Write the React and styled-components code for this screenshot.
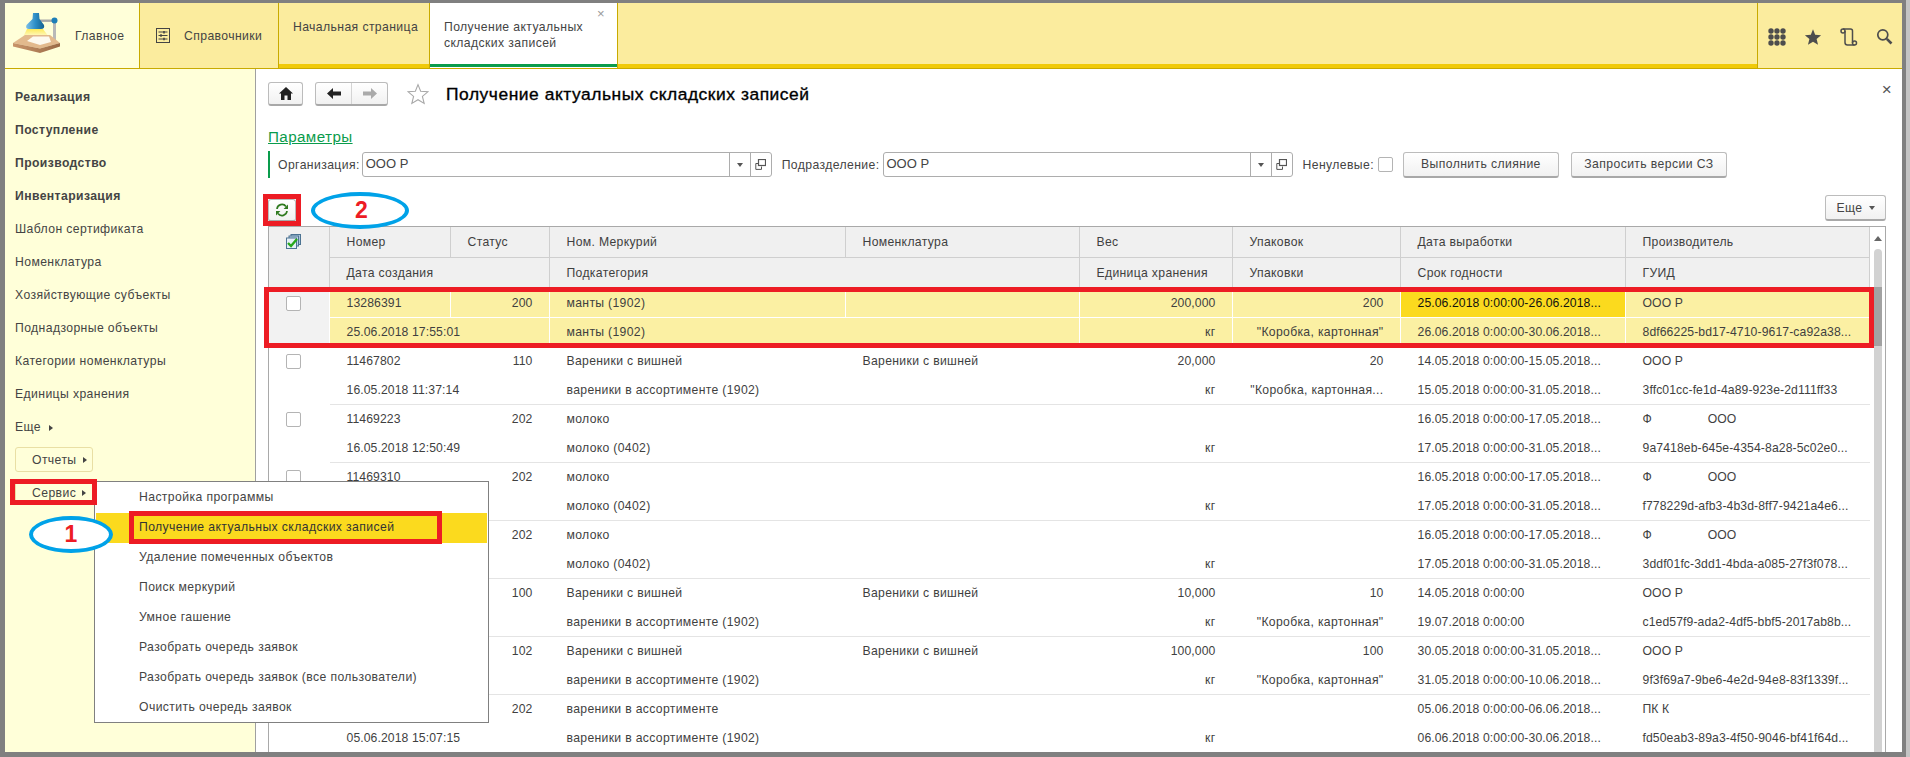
import React from "react";
import styled, { createGlobalStyle } from "styled-components";

const GlobalStyle = createGlobalStyle`
  html, body { margin: 0; padding: 0; background: #808080; }
  * { box-sizing: border-box; }
`;

const Page = styled.div`
  position: relative;
  display: flex;
  flex-direction: column;
  width: 1910px;
  height: 757px;
  padding: 3px 4px 5px 5px;
  border-right: 4px solid #c4c4c4;
  background: #808080;
  overflow: hidden;
  font-family: "Liberation Sans", Arial, sans-serif;
  font-size: 12.2px;
  letter-spacing: 0.4px;
  color: #444;
`;

const TopBar = styled.div`
  display: flex;
  flex: none;
  height: 66px;
  background: #fbec9e;
  border-bottom: 1px solid #c8aa00;
`;
const LogoTab = styled.div`
  display: flex;
  align-items: center;
  gap: 12px;
  width: 135px;
  padding-left: 6px;
  background: #ffffd9;
  border-right: 1px solid #c8aa00;
`;
const SectionTab = styled.div`
  display: flex;
  align-items: center;
  gap: 14px;
  width: 139px;
  padding-left: 16px;
  border-right: 1px solid #c8aa00;
`;
const OpenTab = styled.div`
  position: relative;
  width: ${(p) => p.$width}px;
  padding: 16px 0 0 14px;
  line-height: 16px;
  white-space: nowrap;
  border-right: 1px solid #c8aa00;
  background: ${(p) => (p.$active ? "#fff" : "transparent")};
  box-shadow: ${(p) =>
    p.$active ? "inset 0 -1px 0 #fff, inset 0 -4px 0 #0a9c4c" : "inset 0 -4px 0 #f0ca0a"};
`;
const TabClose = styled.span`
  position: absolute;
  top: 3px;
  right: 12px;
  font-size: 13px;
  color: #999;
`;
const TabSpacer = styled.div`
  flex: 1;
  box-shadow: inset 0 -4px 0 #f0ca0a;
`;
const QuickTools = styled.div`
  display: flex;
  align-items: center;
  gap: 18px;
  width: 145px;
  padding: 2px 0 0 10px;
  border-left: 1px solid #c8aa00;
  color: #4d4d4d;
`;

const Body = styled.div`
  display: flex;
  flex: 1;
  min-height: 0;
`;
const Sidebar = styled.div`
  flex: none;
  width: 251px;
  padding: 12px 0 0 10px;
  background: #ffffd9;
  border-right: 1px solid #a0a0a0;
`;
const SideItem = styled.div`
  height: 33px;
  line-height: 33px;
  font-weight: ${(p) => (p.$bold ? 700 : 400)};
`;
const SideButton = styled.div`
  display: flex;
  align-items: center;
  gap: 6px;
  width: 78px;
  height: 25px;
  margin-top: ${(p) => p.$top}px;
  padding-left: 16px;
  border: 1px solid #e9dfa4;
  border-radius: 3px;
`;
const Caret = styled.span`
  display: inline-block;
  width: 0;
  height: 0;
  margin-left: ${(p) => p.$left || 0}px;
  border-top: 3px solid transparent;
  border-bottom: 3px solid transparent;
  border-left: 4px solid #444;
`;

const Content = styled.div`
  display: flex;
  flex: 1;
  flex-direction: column;
  min-width: 0;
  padding: 13px 16px 0 12px;
  background: #fff;
`;
const TitleRow = styled.div`
  display: flex;
  align-items: center;
  flex: none;
  height: 24px;
`;
const Button = styled.button`
  display: flex;
  align-items: center;
  justify-content: center;
  gap: ${(p) => p.$gap || 0}px;
  flex: none;
  width: ${(p) => p.$width}px;
  height: ${(p) => p.$height || 25}px;
  margin-left: ${(p) => p.$left || 0}px;
  margin-top: ${(p) => p.$top || 0}px;
  padding: 0;
  font: inherit;
  letter-spacing: inherit;
  color: #444;
  background: linear-gradient(#fff, #f1f1f1);
  border: 1px solid #bcbcbc;
  border-bottom: 2px solid #a8a8a8;
  border-radius: 3px;
`;
const NavGroup = styled.div`
  display: flex;
  flex: none;
  width: 73px;
  height: 24px;
  margin-left: 12px;
  background: linear-gradient(#fff, #f1f1f1);
  border: 1px solid #bcbcbc;
  border-bottom: 2px solid #a8a8a8;
  border-radius: 3px;
`;
const NavPart = styled.div`
  display: flex;
  align-items: center;
  justify-content: center;
  flex: 1;
  border-left: ${(p) => (p.$split ? "1px solid #d4d4d4" : "none")};
`;
const FavoriteMark = styled.span`
  flex: none;
  height: 22px;
  margin-left: 19px;
`;
const Title = styled.h1`
  margin: 0 0 0 17px;
  font-size: 17.4px;
  font-weight: 400;
  letter-spacing: 0.55px;
  -webkit-text-stroke: 0.35px #000;
  color: #000;
`;
const PanelClose = styled.span`
  margin-left: auto;
  margin-right: -6px;
  margin-top: -9px;
  font-size: 17px;
  color: #555;
`;
const ParamsLink = styled.a`
  align-self: flex-start;
  margin-top: 22px;
  font-size: 15.2px;
  line-height: 18px;
  color: #0a9c4c;
  text-decoration: underline;
`;
const FilterRow = styled.div`
  display: flex;
  align-items: center;
  flex: none;
  height: 27px;
  margin-top: 5px;
  padding-left: 8px;
  border-left: 2px solid #0a9c4c;
`;
const FieldLabel = styled.span`
  flex: none;
  margin-left: ${(p) => p.$left || 0}px;
  margin-right: ${(p) => p.$right || 0}px;
  white-space: nowrap;
`;
const Field = styled.div`
  display: flex;
  flex: none;
  width: ${(p) => p.$width}px;
  height: 25px;
  border: 1px solid #adadad;
  border-radius: 3px;
`;
const FieldValue = styled.div`
  flex: 1;
  padding: 0 3px;
  font-size: 13px;
  letter-spacing: 0;
  line-height: 22px;
`;
const FieldAction = styled.div`
  display: flex;
  align-items: center;
  justify-content: center;
  flex: none;
  width: 21px;
  border-left: 1px solid #adadad;
`;
const DownCaret = styled.span`
  width: 0;
  height: 0;
  border-left: 3px solid transparent;
  border-right: 3px solid transparent;
  border-top: 4px solid #555;
`;
const CheckBox = styled.span`
  display: block;
  flex: none;
  width: 15px;
  height: 15px;
  margin-left: ${(p) => p.$left || 0}px;
  background: #fff;
  border: 1px solid #b4b4b4;
  border-radius: 2px;
`;
const CommandBar = styled.div`
  display: flex;
  justify-content: space-between;
  flex: none;
  height: 22px;
  margin-top: 21px;
`;

const TableWrap = styled.div`
  display: flex;
  flex: 1;
  min-height: 0;
  margin-top: 5px;
  border: 1px solid #a9a9a9;
  border-bottom: none;
`;
const Rows = styled.div`
  flex: none;
  width: 1601px;
  overflow: hidden;
`;
const Record = styled.div`
  display: grid;
  grid-template-columns: 61px 121px 99px 296px 234px 153px 168px 225px 244px;
  grid-template-rows: ${(p) => (p.$head ? "31px 31px" : "29px 29px")};
  height: ${(p) => (p.$head ? 62 : 58)}px;
  background: ${(p) => (p.$head ? "#f0f0f0" : p.$selected ? "#fbf0a3" : "#fff")};
  border-bottom: ${(p) => (p.$head ? "none" : "1px solid #e4e4e4")};
`;
const lineColor = (p) => (p.$head ? "#cfcfcf" : p.$selected ? "#fff" : "transparent");
const Cell = styled.div`
  grid-column: span ${(p) => p.$span || 1};
  padding: 0 16.5px;
  line-height: ${(p) => (p.$head ? 30 : 29)}px;
  letter-spacing: ${(p) => (p.$plain ? 0.1 : 0.33)}px;
  text-align: ${(p) => (p.$right ? "right" : "left")};
  white-space: pre;
  overflow: hidden;
  color: ${(p) => (p.$current ? "#111" : "#3f3f3f")};
  background: ${(p) => (p.$current ? "#fbda1e" : "transparent")};
  border-right: 1px solid ${lineColor};
  border-bottom: ${(p) => (p.$first ? "1px solid" : "0 solid")} ${lineColor};
`;
const MarkCell = styled.div`
  grid-row: span 2;
  padding: 7px 0 0 17px;
  background: ${(p) => (p.$head ? "#f0f0f0" : p.$selected ? "#f2f2f2" : "#fff")};
  border-right: 1px solid ${lineColor};
`;
const ScrollBar = styled.div`
  display: flex;
  flex: 1;
  flex-direction: column;
  align-items: center;
`;
const ScrollArrow = styled.span`
  flex: none;
  width: 0;
  height: 0;
  margin-top: 9px;
  border-left: 4px solid transparent;
  border-right: 4px solid transparent;
  border-bottom: 5px solid #666;
`;
const ScrollTrack = styled.div`
  flex: 1;
  width: 8px;
  margin-top: 8px;
  padding-top: 38px;
  background: #d2d2d2;
  border-radius: 4px 4px 0 0;
`;
const ScrollThumb = styled.div`
  height: 59px;
  background: #a2a2a2;
`;

const PopupMenu = styled.div`
  position: absolute;
  left: 94px;
  top: 481px;
  width: 395px;
  height: 242px;
  padding: 1px;
  background: #fff;
  border: 1px solid #808080;
`;
const MenuItem = styled.div`
  height: 30px;
  padding-left: 43px;
  line-height: 29px;
  background: ${(p) => (p.$hover ? "#fbda1e" : "transparent")};
  color: ${(p) => (p.$hover ? "#333" : "#444")};
`;
const RedFrame = styled.div`
  position: absolute;
  left: ${(p) => p.$x}px;
  top: ${(p) => p.$y}px;
  width: ${(p) => p.$w}px;
  height: ${(p) => p.$h}px;
  border: 5px solid #ed1c24;
  pointer-events: none;
`;
const Callout = styled.div`
  position: absolute;
  left: ${(p) => p.$x}px;
  top: ${(p) => p.$y}px;
  display: flex;
  align-items: center;
  justify-content: center;
  width: ${(p) => p.$w}px;
  height: 37px;
  padding-left: ${(p) => p.$shift || 0}px;
  background: #fff;
  border: 4px solid #00a2e8;
  border-radius: 50%;
  font-size: 23px;
  font-weight: 700;
  color: #ed1c24;
`;

const LampLogo = () => (
  <svg width="52" height="46" viewBox="0 0 52 46" style={{ marginTop: -6 }}>
    <defs>
      <linearGradient id="shade" x1="0" y1="0" x2="1" y2="0">
        <stop offset="0" stopColor="#7cc0e8" />
        <stop offset="0.5" stopColor="#2f8fc8" />
        <stop offset="1" stopColor="#15618f" />
      </linearGradient>
      <linearGradient id="beam" x1="0" y1="0" x2="0" y2="1">
        <stop offset="0" stopColor="#fdea5a" />
        <stop offset="1" stopColor="#fffbd0" />
      </linearGradient>
      <linearGradient id="edge" x1="0" y1="0" x2="1" y2="0">
        <stop offset="0" stopColor="#c8946a" />
        <stop offset="1" stopColor="#9a6a45" />
      </linearGradient>
    </defs>
    <path d="M16 19 L32 19 L38 27 L12 27 Z" fill="url(#beam)" />
    <rect x="42" y="10" width="3" height="20" fill="#b8b8b8" />
    <rect x="28" y="9.5" width="15" height="2.4" fill="#a8a8a8" />
    <circle cx="43.5" cy="10.5" r="3" fill="#1d7fb8" />
    <path d="M22 3 L28 3 L28.5 9 L33 15 Q34 19 30 19 L18 19 Q14 19 15.5 15 L21.5 9 Z" fill="url(#shade)" />
    <path d="M2 33 L14 25 L39 25 L49 33 L29 38.5 Z" fill="#e2b98d" />
    <path d="M2 33 L29 38.5 L49 33 L49 36.5 L29 43 L2 36.5 Z" fill="url(#edge)" />
    <path d="M16 31 L22 26.5 L38 26.5 L40 32 L29 35 Z" fill="#fdf9ee" />
  </svg>
);

const ListIcon = () => (
  <svg width="14" height="15" viewBox="0 0 14 15" fill="none" stroke="#444">
    <rect x="0.5" y="0.5" width="13" height="14" />
    <path d="M2.5 4h9M2.5 7.5h9M2.5 11h9" />
    <path d="M8 3v2.4M5 6.3v2.4M8 9.8v2.4" strokeWidth="1.6" />
  </svg>
);

const GridIcon = () => (
  <svg width="18" height="18" viewBox="0 0 18 18" fill="#4d4d4d">
    {[3, 9, 15].map((cy) =>
      [3, 9, 15].map((cx) => <circle key={`${cx}-${cy}`} cx={cx} cy={cy} r="2.7" />)
    )}
  </svg>
);
const StarIcon = ({ filled }) => (
  <svg width={filled ? 18 : 22} height={filled ? 18 : 22} viewBox="0 0 20 20">
    <path
      d="M10 1.5 L12.4 7.5 L19 8 L14 12.2 L15.6 18.6 L10 15.2 L4.4 18.6 L6 12.2 L1 8 L7.6 7.5 Z"
      fill={filled ? "#4d4d4d" : "#fff"}
      stroke={filled ? "none" : "#a8a8a8"}
    />
  </svg>
);
const HistoryIcon = () => (
  <svg width="18" height="18" viewBox="0 0 18 18" fill="none" stroke="#4d4d4d" strokeWidth="1.5">
    <circle cx="3" cy="3" r="2" />
    <path d="M3 1 H10.5 Q12.5 1 12.5 3 V15" />
    <path d="M5 3 V14.5 Q5 17 7.5 17 H14.5" />
    <circle cx="14.5" cy="15" r="2" />
  </svg>
);
const SearchIcon = () => (
  <svg width="17" height="17" viewBox="0 0 17 17" fill="none" stroke="#4d4d4d">
    <circle cx="6.8" cy="6.8" r="5" strokeWidth="1.7" />
    <path d="M10.8 10.8 L15.5 15.5" strokeWidth="2.6" />
  </svg>
);
const HomeIcon = () => (
  <svg width="14" height="13" viewBox="0 0 14 13" fill="#222">
    <path d="M7 0 L14 6.5 L12 6.5 L12 13 L8.5 13 L8.5 8.5 L5.5 8.5 L5.5 13 L2 13 L2 6.5 L0 6.5 Z" />
  </svg>
);
const ArrowIcon = ({ right, color }) => (
  <svg width="14" height="11" viewBox="0 0 14 11" fill={color}>
    <path
      d="M0 5.5 L6 0 L6 3.5 L14 3.5 L14 7.5 L6 7.5 L6 11 Z"
      transform={right ? "matrix(-1 0 0 1 14 0)" : undefined}
    />
  </svg>
);
const OpenIcon = () => (
  <svg width="11" height="11" viewBox="0 0 11 11" fill="none" stroke="#555">
    <rect x="3.5" y="0.5" width="7" height="6" strokeWidth="1.2" />
    <path d="M3 4.5 H0.8 V10.4 H6.5 V7.5" />
  </svg>
);
const RefreshIcon = () => (
  <svg width="14" height="14" viewBox="0 0 14 14" fill="none" stroke="#2f7a1f" strokeWidth="1.7">
    <path d="M2 6 A5 5 0 0 1 11 3.5" />
    <path d="M12 8 A5 5 0 0 1 3 10.5" />
    <path d="M13 1.5 L13 6 L8.6 6 Z" fill="#2f7a1f" stroke="none" />
    <path d="M1 12.5 L1 8 L5.4 8 Z" fill="#2f7a1f" stroke="none" />
  </svg>
);
const SelectAllIcon = () => (
  <svg width="15" height="15" viewBox="0 0 15 15">
    <rect x="5" y="0.5" width="9.5" height="10" fill="#a9c6dc" stroke="#4c7392" />
    <rect x="3" y="2" width="9.5" height="10" fill="#bdd4e6" stroke="#4c7392" />
    <rect x="0.5" y="4" width="10" height="10.5" fill="#e6f0f7" stroke="#4c7392" />
    <path d="M2 9 L5 12 L11 5" fill="none" stroke="#28a81c" strokeWidth="2.4" />
  </svg>
);

const sideLinks = [
  ["Реализация", true],
  ["Поступление", true],
  ["Производство", true],
  ["Инвентаризация", true],
  ["Шаблон сертификата"],
  ["Номенклатура"],
  ["Хозяйствующие субъекты"],
  ["Поднадзорные объекты"],
  ["Категории номенклатуры"],
  ["Единицы хранения"],
];

const menuItems = [
  "Настройка программы",
  "Получение актуальных складских записей",
  "Удаление помеченных объектов",
  "Поиск меркурий",
  "Умное гашение",
  "Разобрать очередь заявок",
  "Разобрать очередь заявок (все пользователи)",
  "Очистить очередь заявок",
];

const spacer = " ".repeat(16);
const box = "\"Коробка, картонная\"";
const varenikiSub = "вареники в ассортименте (1902)";
const varenik = "Вареники с вишней";

const rows = [
  { top: ["13286391", "200", "манты (1902)", "", "200,000", "200", "25.06.2018 0:00:00-26.06.2018...", "ООО Р"],
    bottom: ["25.06.2018 17:55:01", "манты (1902)", "кг", box, "26.06.2018 0:00:00-30.06.2018...", "8df66225-bd17-4710-9617-ca92a38..."], selected: true },
  { top: ["11467802", "110", varenik, varenik, "20,000", "20", "14.05.2018 0:00:00-15.05.2018...", "ООО Р"],
    bottom: ["16.05.2018 11:37:14", varenikiSub, "кг", "\"Коробка, картонная...", "15.05.2018 0:00:00-31.05.2018...", "3ffc01cc-fe1d-4a89-923e-2d111ff33"] },
  { top: ["11469223", "202", "молоко", "", "", "", "16.05.2018 0:00:00-17.05.2018...", "Ф" + spacer + "ООО"],
    bottom: ["16.05.2018 12:50:49", "молоко (0402)", "кг", "", "17.05.2018 0:00:00-31.05.2018...", "9a7418eb-645e-4354-8a28-5c02e0..."] },
  { top: ["11469310", "202", "молоко", "", "", "", "16.05.2018 0:00:00-17.05.2018...", "Ф" + spacer + "ООО"],
    bottom: ["", "молоко (0402)", "кг", "", "17.05.2018 0:00:00-31.05.2018...", "f778229d-afb3-4b3d-8ff7-9421a4e6..."] },
  { top: ["", "202", "молоко", "", "", "", "16.05.2018 0:00:00-17.05.2018...", "Ф" + spacer + "ООО"],
    bottom: ["", "молоко (0402)", "кг", "", "17.05.2018 0:00:00-31.05.2018...", "3ddf01fc-3dd1-4bda-a085-27f3f078..."] },
  { top: ["", "100", varenik, varenik, "10,000", "10", "14.05.2018 0:00:00", "ООО Р"],
    bottom: ["", varenikiSub, "кг", box, "19.07.2018 0:00:00", "c1ed57f9-ada2-4df5-bbf5-2017ab8b..."] },
  { top: ["", "102", varenik, varenik, "100,000", "100", "30.05.2018 0:00:00-31.05.2018...", "ООО Р"],
    bottom: ["", varenikiSub, "кг", box, "31.05.2018 0:00:00-10.06.2018...", "9f3f69a7-9be6-4e2d-94e8-83f1339f..."] },
  { top: ["", "202", "вареники в ассортименте", "", "", "", "05.06.2018 0:00:00-06.06.2018...", "ПК К"],
    bottom: ["05.06.2018 15:07:15", varenikiSub, "кг", "", "06.06.2018 0:00:00-30.06.2018...", "fd50eab3-89a3-4f50-9046-bf41f64d..."] },
];

const topRight = [false, true, false, false, true, true, false, false];
// latin, digits, dates and caps come out narrower than cyrillic lowercase
const isPlain = (text) => !/[а-яё]/.test(text);

const DataRow = ({ row }) => {
  const s = row.selected;
  return (
    <Record $selected={s}>
      <MarkCell $selected={s}>
        <CheckBox />
      </MarkCell>
      {row.top.map((text, i) => (
        <Cell key={i} $first $selected={s} $plain={isPlain(text)} $right={topRight[i]} $current={s && i === 6}>
          {text}
        </Cell>
      ))}
      <Cell $span={2} $plain $selected={s}>{row.bottom[0]}</Cell>
      <Cell $span={2} $selected={s}>{row.bottom[1]}</Cell>
      <Cell $selected={s} $right>{row.bottom[2]}</Cell>
      <Cell $selected={s} $right>{row.bottom[3]}</Cell>
      <Cell $selected={s} $plain>{row.bottom[4]}</Cell>
      <Cell $selected={s} $plain>{row.bottom[5]}</Cell>
    </Record>
  );
};

const App = () => (
  <Page>
    <GlobalStyle />
    <TopBar>
      <LogoTab>
        <LampLogo />
        Главное
      </LogoTab>
      <SectionTab>
        <ListIcon />
        Справочники
      </SectionTab>
      <OpenTab $width={151}>Начальная страница</OpenTab>
      <OpenTab $width={188} $active>
        Получение актуальных
        <br />
        складских записей
        <TabClose>×</TabClose>
      </OpenTab>
      <TabSpacer />
      <QuickTools>
        <GridIcon />
        <StarIcon filled />
        <HistoryIcon />
        <SearchIcon />
      </QuickTools>
    </TopBar>
    <Body>
      <Sidebar>
        {sideLinks.map(([text, bold]) => (
          <SideItem key={text} $bold={bold}>{text}</SideItem>
        ))}
        <SideItem>
          Еще <Caret $left={4} />
        </SideItem>
        <SideButton $top={3}>Отчеты <Caret /></SideButton>
        <SideButton $top={8}>Сервис <Caret /></SideButton>
      </Sidebar>
      <Content>
        <TitleRow>
          <Button $width={35} $height={24}><HomeIcon /></Button>
          <NavGroup>
            <NavPart><ArrowIcon color="#222" /></NavPart>
            <NavPart $split><ArrowIcon right color="#aaa" /></NavPart>
          </NavGroup>
          <FavoriteMark><StarIcon /></FavoriteMark>
          <Title>Получение актуальных складских записей</Title>
          <PanelClose>×</PanelClose>
        </TitleRow>
        <ParamsLink>Параметры</ParamsLink>
        <FilterRow>
          <FieldLabel $right={2}>Организация:</FieldLabel>
          <Field $width={410}>
            <FieldValue>ООО Р</FieldValue>
            <FieldAction><DownCaret /></FieldAction>
            <FieldAction><OpenIcon /></FieldAction>
          </Field>
          <FieldLabel $left={10} $right={3}>Подразделение:</FieldLabel>
          <Field $width={410}>
            <FieldValue>ООО Р</FieldValue>
            <FieldAction><DownCaret /></FieldAction>
            <FieldAction><OpenIcon /></FieldAction>
          </Field>
          <FieldLabel $left={10}>Ненулевые:</FieldLabel>
          <CheckBox $left={4} />
          <Button $width={156} $height={26} $left={10}>Выполнить слияние</Button>
          <Button $width={156} $height={26} $left={12}>Запросить версии СЗ</Button>
        </FilterRow>
        <CommandBar>
          <Button $width={28} $height={23}><RefreshIcon /></Button>
          <Button $width={61} $height={26} $gap={6} $top={-4}>
            Еще <DownCaret />
          </Button>
        </CommandBar>
        <TableWrap>
          <Rows>
            <Record $head>
              <MarkCell $head><SelectAllIcon /></MarkCell>
              {["Номер", "Статус", "Ном. Меркурий", "Номенклатура", "Вес", "Упаковок", "Дата выработки", "Производитель"].map((t) => (
                <Cell key={t} $head $first>{t}</Cell>
              ))}
              <Cell $head $span={2}>Дата создания</Cell>
              <Cell $head $span={2}>Подкатегория</Cell>
              <Cell $head>Единица хранения</Cell>
              <Cell $head>Упаковки</Cell>
              <Cell $head>Срок годности</Cell>
              <Cell $head>ГУИД</Cell>
            </Record>
            {rows.map((row, i) => (
              <DataRow key={i} row={row} />
            ))}
          </Rows>
          <ScrollBar>
            <ScrollArrow />
            <ScrollTrack><ScrollThumb /></ScrollTrack>
          </ScrollBar>
        </TableWrap>
      </Content>
    </Body>

    <PopupMenu>
      {menuItems.map((text, i) => (
        <MenuItem key={text} $hover={i === 1}>{text}</MenuItem>
      ))}
    </PopupMenu>
    <RedFrame $x={10} $y={479} $w={87} $h={26} />
    <RedFrame $x={129} $y={511} $w={313} $h={33} />
    <RedFrame $x={263} $y={194} $w={38} $h={32} />
    <RedFrame $x={264} $y={287} $w={1610} $h={61} />
    <Callout $x={29} $y={516} $w={84}>1</Callout>
    <Callout $x={311} $y={192} $w={98} $shift={3}>2</Callout>
  </Page>
);

export default App;
